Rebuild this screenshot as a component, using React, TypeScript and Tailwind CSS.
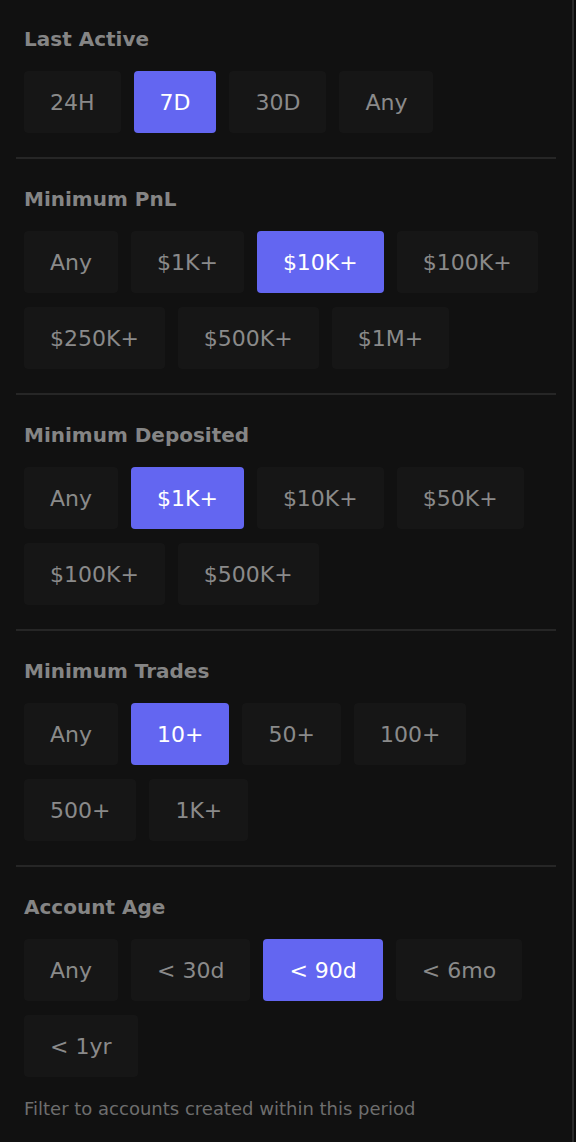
import React from "react";

type Section = {
  title: string;
  options: string[];
  active: string;
  help?: string;
};

const sections: Section[] = [
  { title: "Last Active", options: ["24H", "7D", "30D", "Any"], active: "7D" },
  {
    title: "Minimum PnL",
    options: ["Any", "$1K+", "$10K+", "$100K+", "$250K+", "$500K+", "$1M+"],
    active: "$10K+",
  },
  {
    title: "Minimum Deposited",
    options: ["Any", "$1K+", "$10K+", "$50K+", "$100K+", "$500K+"],
    active: "$1K+",
  },
  {
    title: "Minimum Trades",
    options: ["Any", "10+", "50+", "100+", "500+", "1K+"],
    active: "10+",
  },
  {
    title: "Account Age",
    options: ["Any", "< 30d", "< 90d", "< 6mo", "< 1yr"],
    active: "< 90d",
    help: "Filter to accounts created within this period",
  },
];

export default function App() {
  return (
    <div
      className="flex min-h-[1142px] w-[576px] bg-[#0c0c0c]"
      style={{ fontFamily: "'DejaVu Sans', sans-serif" }}
    >
      <div className="w-[574px] border-r-2 border-[#2a2a2a] bg-[#111111] px-4">
        {sections.map((s, i) => (
          <div key={s.title}>
            {i > 0 && <div className="h-[2px] bg-[#262626]" />}
            <div className={i > 0 ? "px-2 pb-6 pt-[26px]" : "px-2 pb-6 pt-[25px]"}>
              <div className="mb-[18px] h-7 text-[20px] font-semibold leading-7 text-[#858585]">
                {s.title}
              </div>
              <div className="flex flex-wrap gap-x-[13px] gap-y-[14px]">
                {s.options.map((o) => {
                  const on = o === s.active;
                  return (
                    <button
                      key={o}
                      className={
                        on
                          ? "h-[62px] rounded-[4px] bg-[#6366f1] px-[26px] text-[22px] text-white"
                          : "h-[62px] rounded-[4px] bg-[#161616] px-[26px] text-[22px] text-[#8a8a8a]"
                      }
                    >
                      {o}
                    </button>
                  );
                })}
              </div>
              {s.help && (
                <div className="mt-[20px] text-[18px] leading-6 text-[#6e6e6e]">
                  {s.help}
                </div>
              )}
            </div>
          </div>
        ))}
      </div>
    </div>
  );
}
